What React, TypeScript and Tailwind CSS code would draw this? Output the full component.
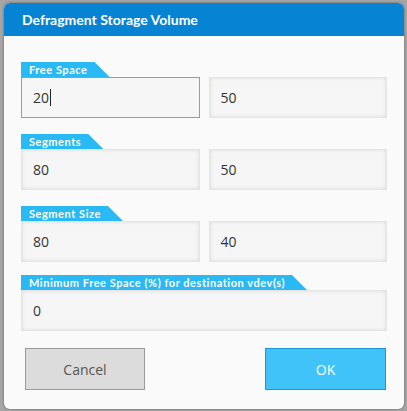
import React from "react";

const fields = [
  { label: "Free Space", values: ["20", "50"] },
  { label: "Segments", values: ["80", "50"] },
  { label: "Segment Size", values: ["80", "40"] },
];

function Tab({ label }: { label: string }) {
  return (
    <div
      className="h-[15px] w-fit bg-[#29b9f5] pl-[8px] pr-[22px] font-['Lato',sans-serif] text-[11px] font-bold leading-[15px] tracking-[0.05em] text-white whitespace-nowrap"
      style={{ clipPath: "polygon(0 0, calc(100% - 15px) 0, 100% 100%, 0 100%)" }}
    >
      {label}
    </div>
  );
}

function Field({ value, focused }: { value: string; focused?: boolean }) {
  return (
    <div
      className={`flex h-[41px] flex-1 items-center bg-[#f6f6f6] pl-[12px] text-[14px] text-[#333] ${
        focused
          ? "outline outline-1 -outline-offset-1 outline-[#33bff6]"
          : "shadow-[inset_0_0_0_1px_#e4e4e4,inset_0_0_5px_rgba(0,0,0,0.16)]"
      }`}
    >
      <span>{value}</span>
      {focused && <span className="ml-[1px] h-[17px] w-px bg-[#222]" />}
    </div>
  );
}

export default function App() {
  return (
    <div className="h-[411px] w-[407px] bg-[#a6a6a6] pl-[4px] pt-[3px] font-['Open_Sans',sans-serif]">
      <div className="flex h-[406px] w-[400px] flex-col overflow-hidden rounded-[6px] bg-[#fafafa] shadow-[0_0_3px_rgba(0,0,0,0.4)]">
        <div className="flex h-[33px] items-center bg-[#0783d4] pl-[18px] font-['Lato',sans-serif] text-[14px] font-bold text-white">
          Defragment Storage Volume
        </div>
        <div className="flex flex-col px-[17px] pt-[26px]">
          {fields.map((f, i) => (
            <div key={f.label} className={i === 0 ? "" : "mt-[16px]"}>
              <Tab label={f.label} />
              <div className="flex gap-[9px]">
                <Field value={f.values[0]} focused={i === 0} />
                <Field value={f.values[1]} />
              </div>
            </div>
          ))}
          <div className="mt-[13px]">
            <Tab label="Minimum Free Space (%) for destination vdev(s)" />
            <div className="flex">
              <Field value="0" />
            </div>
          </div>
          <div className="mt-[17px] flex justify-between pl-[4px] pr-[1px]">
            <button className="h-[42px] w-[120px] border border-[#9a9a9a] bg-[#dcdcdc] text-[14px] text-[#555]">
              Cancel
            </button>
            <button className="h-[42px] w-[121px] border border-[#1a97d6] bg-[#3fc3f9] text-[14px] text-white">
              OK
            </button>
          </div>
        </div>
      </div>
    </div>
  );
}
